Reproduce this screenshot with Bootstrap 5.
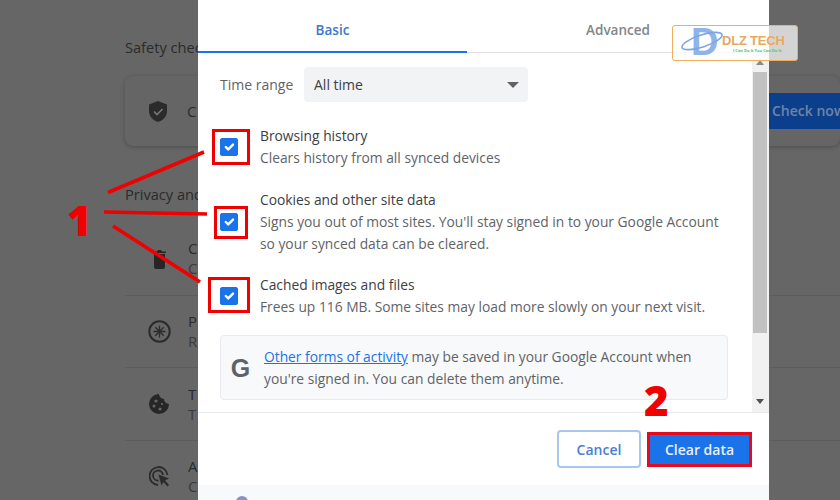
<!DOCTYPE html>
<html lang="en">
<head>
    <meta charset="UTF-8">
    <meta name="viewport" content="width=device-width, initial-scale=1.0">
    <title>Clear browsing data</title>
    <link href="https://cdn.jsdelivr.net/npm/bootstrap@5.3.0/dist/css/bootstrap.min.css" rel="stylesheet">
    <style>
        html, body { height: 500px; overflow: hidden; }
        body {
            position: relative;
            background-color: #666666;
            font-family: "Open Sans", "Liberation Sans", sans-serif;
            font-size: 13.8px;
            color: #5f6368;
        }
        /* page behind the dialog */
        .page-back { padding-left: 125px; color: #2b2b2b; }
        .back-label { font-size: 14.6px; line-height: 20px; white-space: nowrap; }
        .back-label.first { padding-top: 37px; }
        .back-label.second { padding-top: 38px; }
        .back-card {
            margin-top: 19px;
            height: 70px;
            width: 715px;
            padding-left: 24px;
            border-radius: 8px;
            background-color: #656565;
            box-shadow: 0 1px 4px rgba(0, 0, 0, 0.25);
        }
        .back-list { margin-top: 18px; width: 715px; }
        .back-row { height: 72.5px; border-top: 1px solid #5c5c5c; padding-left: 22px; }
        .back-row.first-row { border-top: 0; }
        .row-icon { width: 24px; flex: none; text-align: center; }
        .back-letter { padding-left: 17px; line-height: 20px; font-size: 15px; }
        .back-card .back-letter { padding-left: 20px; }
        .back-letter span { display: block; color: #3a3a3a; }
        .check-now {
            position: absolute;
            left: 769px;
            top: 93px;
            width: 71px;
            height: 36px;
            line-height: 36px;
            padding-left: 3px;
            white-space: nowrap;
            overflow: hidden;
            background-color: #0b3f8c;
            color: #6f84a6;
            font-weight: 600;
            font-size: 14px;
        }
        /* dialog */
        .clear-dialog {
            position: absolute;
            left: 198px;
            top: 0;
            width: 571px;
            height: 500px;
            background-color: #fff;
        }
        .tab-row { height: 53px; border-bottom: 1px solid #e0e0e0; }
        .tab-item { width: 269px; height: 53px; padding-top: 20px; line-height: 20px; text-align: center; font-weight: 600; font-size: 13.5px; color: #80868b; }
        .tab-item.active-tab { color: #3b78c9; border-bottom: 2px solid #1a73e8; }
        .tab-item.other-tab { width: 302px; }
        .scroll-area { height: 360px; border-bottom: 1px solid #e8eaed; overflow: hidden; }
        .scroll-body { width: 554px; padding: 14px 22px 0 22px; }
        .range-label { width: 84px; color: #5f6368; font-size: 14px; }
        .range-select {
            width: 224px;
            height: 35px;
            padding: 0 10px;
            border: 0;
            border-radius: 4px;
            background-color: #f1f3f4;
            background-image: url("data:image/svg+xml,%3csvg xmlns='http://www.w3.org/2000/svg' viewBox='0 0 12 6'%3e%3cpath fill='%235f6368' d='M0 0h12L6 6z'/%3e%3c/svg%3e");
            background-size: 12px 6px;
            background-position: right 9px center;
            color: #3c4043;
            font-size: 14px;
        }
        .check-item { gap: 22px; line-height: 22px; }
        .check-item.item-a { margin-top: 23px; }
        .check-item.item-b { margin-top: 20px; }
        .check-item.item-c { margin-top: 19px; }
        .check-item .form-check-input { width: 18px; height: 18px; margin: 0; flex: none; background-color: #1a73e8; border-color: #1a73e8; border-radius: 2px; }
        .check-title { color: #3c4043; }
        .activity-box {
            width: 508px;
            height: 65px;
            margin-top: 17px;
            background-color: #f8f9fa;
            border: 1px solid #e8eaed;
            border-radius: 4px;
            line-height: 22px;
        }
        .activity-box a { color: #1a73e8; }
        .g-mark { width: 43px; padding-right: 4px; text-align: center; font-family: "Liberation Sans", sans-serif; font-size: 25px; font-weight: 700; color: #5f6368; flex: none; }
        .fake-scrollbar {
            position: absolute;
            right: 0;
            top: 53px;
            width: 17px;
            height: 359px;
            background-color: #f1f1f1;
        }
        .thumb { position: absolute; left: 1px; right: 2px; top: 19px; height: 261px; background-color: #c1c1c1; }
        .arrow-up, .arrow-down { position: absolute; left: 4px; width: 0; height: 0; border-left: 4px solid transparent; border-right: 4px solid transparent; }
        .arrow-up { top: 7px; border-bottom: 5px solid #8a8a8a; }
        .arrow-down { bottom: 8px; border-top: 5px solid #505050; }
        .dialog-foot { height: 72px; padding-right: 17px; gap: 6px; }
        .btn-cancel, .btn-clear { height: 38px; padding: 0; font-size: 14px; font-weight: 600; border-radius: 4px; font-family: inherit; }
        .btn-cancel { width: 84px; color: #4a80d0; background: #fff; border: 2px solid #a9c6ee; }
        .btn-clear { width: 105px; height: 35px; color: #e8f0fe; background-color: #1a73e8; border: 3px solid #e8091c; border-radius: 0; }
        .dialog-strip { height: 15px; background-color: #f8f9fa; padding-left: 34px; overflow: hidden; }
        /* red annotations and watermark */
        .marks { position: absolute; left: 0; top: 0; width: 840px; height: 500px; pointer-events: none; }
        .step-num { position: absolute; color: #f00000; font-family: "Open Sans", "Liberation Sans", sans-serif; font-weight: 800; font-size: 42px; line-height: 42px; }
        .step-one { left: 67px; top: 199px; }
        .step-two { left: 644px; top: 379px; }
        .brand-mark {
            position: absolute;
            left: 672px;
            top: 25px;
            width: 126px;
            height: 36px;
            border: 1px solid #eeae5c;
            border-radius: 3px;
            background-color: rgba(255, 255, 255, 0.72);
        }
        .brand-name { position: absolute; left: 49px; top: 7px; font-family: "Liberation Sans", sans-serif; font-weight: 700; font-size: 13px; line-height: 15px; color: #e9a95c; white-space: nowrap; letter-spacing: -0.2px; }
        .brand-sub { position: absolute; left: 60px; top: 22px; font-size: 4px; line-height: 5px; font-weight: 700; color: #4cc36a; white-space: nowrap; }
    </style>
</head>
<body>
    <div class="page-back">
        <div class="back-label first">Safety check</div>
        <div class="back-card d-flex align-items-center">
            <svg width="18" height="21" viewBox="0 0 18 21">
                <path d="M9 0 L18 3.5 V10 C18 15.5 14 19.5 9 21 C4 19.5 0 15.5 0 10 V3.5 Z" fill="#2b2b2b"/>
                <path d="M5 10.5 L8 13.5 L13.5 8" fill="none" stroke="#777" stroke-width="1.6"/>
            </svg>
            <span class="back-letter">C</span>
        </div>
        <div class="back-label second">Privacy and security</div>
        <div class="back-list">
            <div class="back-row first-row d-flex align-items-center">
                <div class="row-icon"><svg width="13" height="19" viewBox="0 0 13 19"><path d="M1 4 H12 V17 a2 2 0 0 1 -2 2 H3 a2 2 0 0 1 -2 -2 Z M0 1.5 H4 L5 0 H8 L9 1.5 H13 V3 H0 Z" fill="#262626"/></svg></div>
                <span class="back-letter">C<span>C</span></span>
            </div>
            <div class="back-row d-flex align-items-center">
                <div class="row-icon"><svg width="23" height="23" viewBox="0 0 23 23"><circle cx="11.5" cy="11.5" r="10.2" fill="none" stroke="#2b2b2b" stroke-width="2"/><path d="M11.5 5.5 V17.5 M5.5 11.5 H17.5 M7.3 7.3 L15.7 15.7 M15.7 7.3 L7.3 15.7" stroke="#2b2b2b" stroke-width="1.3"/></svg></div>
                <span class="back-letter">P<span>R</span></span>
            </div>
            <div class="back-row d-flex align-items-center">
                <div class="row-icon"><svg width="20" height="20" viewBox="0 0 20 20"><path d="M10 0 A10 10 0 1 0 20 10 A5 5 0 0 1 15 5 A5 5 0 0 1 10 0 Z" fill="#262626"/><circle cx="7" cy="7" r="1.6" fill="#666"/><circle cx="5" cy="12" r="1.5" fill="#666"/><circle cx="11" cy="15" r="1.6" fill="#666"/><circle cx="13" cy="10" r="1.1" fill="#666"/></svg></div>
                <span class="back-letter">T<span>T</span></span>
            </div>
            <div class="back-row d-flex align-items-center">
                <div class="row-icon"><svg width="21" height="21" viewBox="0 0 21 21"><path d="M9 19 A9 9 0 1 1 18.5 9 M9.5 14.5 A5 5 0 1 1 14 9" fill="none" stroke="#2b2b2b" stroke-width="1.8"/><path d="M9.5 8.5 L20 12.5 L16 14.5 L20 19 L18.5 20.5 L14.5 16 L12.5 19.5 Z" fill="#2b2b2b"/></svg></div>
                <span class="back-letter">A<span>C</span></span>
            </div>
        </div>
    </div>
    <div class="check-now">Check now</div>

    <div class="clear-dialog">
        <div class="tab-row d-flex">
            <div class="tab-item active-tab">Basic</div>
            <div class="tab-item other-tab">Advanced</div>
        </div>
        <div class="scroll-area">
            <div class="scroll-body">
                <div class="d-flex align-items-center">
                    <span class="range-label">Time range</span>
                    <select class="form-select range-select">
                        <option>All time</option>
                    </select>
                </div>
                <div class="check-item item-a d-flex align-items-center">
                    <input class="form-check-input" type="checkbox" checked>
                    <div>
                        <div class="check-title">Browsing history</div>
                        <div>Clears history from all synced devices</div>
                    </div>
                </div>
                <div class="check-item item-b d-flex align-items-center">
                    <input class="form-check-input" type="checkbox" checked>
                    <div>
                        <div class="check-title">Cookies and other site data</div>
                        <div>Signs you out of most sites. You'll stay signed in to your Google Account<br>so your synced data can be cleared.</div>
                    </div>
                </div>
                <div class="check-item item-c d-flex align-items-center">
                    <input class="form-check-input" type="checkbox" checked>
                    <div>
                        <div class="check-title">Cached images and files</div>
                        <div>Frees up 116 MB. Some sites may load more slowly on your next visit.</div>
                    </div>
                </div>
                <div class="activity-box d-flex align-items-center">
                    <div class="g-mark">G</div>
                    <div><a href="#">Other forms of activity</a> may be saved in your Google Account when<br>you're signed in. You can delete them anytime.</div>
                </div>
            </div>
        </div>
        <div class="fake-scrollbar">
            <div class="arrow-up"></div>
            <div class="thumb"></div>
            <div class="arrow-down"></div>
        </div>
        <div class="dialog-foot d-flex align-items-center justify-content-end">
            <button type="button" class="btn btn-cancel">Cancel</button>
            <button type="button" class="btn btn-clear">Clear data</button>
        </div>
        <div class="dialog-strip">
            <svg class="d-block" width="20" height="15" viewBox="0 0 20 15"><circle cx="10" cy="17" r="6" fill="#8d8fc9"/></svg>
        </div>
    </div>

    <svg class="marks" viewBox="0 0 840 500">
        <g fill="none" stroke="#f00000" stroke-width="3.6">
            <path d="M108 192.5 L204 152"/>
            <path d="M104 212 L207 214"/>
            <path d="M113 226 L200 282"/>
        </g>
        <g fill="none" stroke="#f00000" stroke-width="3">
            <rect x="213.5" y="130.5" width="35" height="33"/>
            <rect x="215.5" y="207.5" width="31" height="30"/>
            <rect x="209.5" y="278.5" width="39" height="33"/>
        </g>
    </svg>
    <div class="step-num step-one">1</div>
    <div class="step-num step-two">2</div>

    <div class="brand-mark">
        <svg width="60" height="34" viewBox="0 0 60 34" class="position-absolute top-0 start-0">
            <text x="18" y="29" font-family="Liberation Sans, sans-serif" font-weight="700" font-size="38" fill="#8fb4ea">D</text>
            <ellipse cx="29" cy="15" rx="21" ry="6" transform="rotate(-18 29 15)" fill="none" stroke="#7ba6e6" stroke-width="1.6"/>
        </svg>
        <div class="brand-name">DLZ TECH</div>
        <div class="brand-sub">I Can Do It You Can Do It</div>
    </div>

    <script src="https://cdn.jsdelivr.net/npm/bootstrap@5.3.0/dist/js/bootstrap.bundle.min.js"></script>
</body>
</html>
